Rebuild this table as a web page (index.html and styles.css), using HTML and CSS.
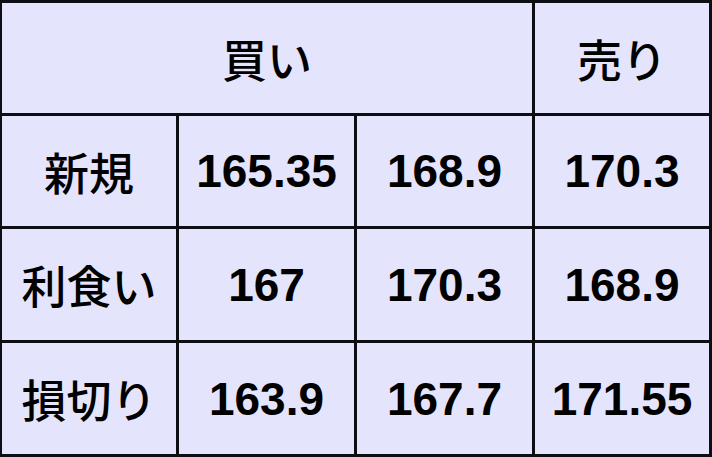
FILE: index.html
```html
<!DOCTYPE html>
<html lang="ja">
<head>
<meta charset="utf-8">
<link rel="stylesheet" href="styles.css">
</head>
<body>
<div class="table">
  <div class="cell head span3">買い</div>
  <div class="cell head">売り</div>
  <div class="cell label">新規</div>
  <div class="cell num">165.35</div>
  <div class="cell num">168.9</div>
  <div class="cell num">170.3</div>
  <div class="cell label">利食い</div>
  <div class="cell num">167</div>
  <div class="cell num">170.3</div>
  <div class="cell num">168.9</div>
  <div class="cell label">損切り</div>
  <div class="cell num">163.9</div>
  <div class="cell num">167.7</div>
  <div class="cell num">171.55</div>
</div>
</body>
</html>
```

FILE: styles.css
```css
html, body {
  margin: 0;
  padding: 0;
  background: #e4e4fc;
}
.table {
  box-sizing: border-box;
  width: 712px;
  height: 457px;
  background: #0d0d14;
  padding: 3px 3px 3px 2px;
  display: grid;
  grid-template-columns: 174px 175px 175px 174px;
  grid-template-rows: 110px 110px 111px 111px;
  gap: 3px;
}
.cell {
  background: #e4e4fc;
  display: flex;
  align-items: center;
  justify-content: center;
  color: #000;
  font-size: 45px;
  line-height: 1;
}
.span3 {
  grid-column: span 3;
}
.head, .label {
  font-family: "Noto Sans CJK JP", sans-serif;
  font-weight: 500;
}
.num {
  font-family: "Liberation Sans", Arial, sans-serif;
  font-weight: bold;
  font-size: 46px;
}
```
